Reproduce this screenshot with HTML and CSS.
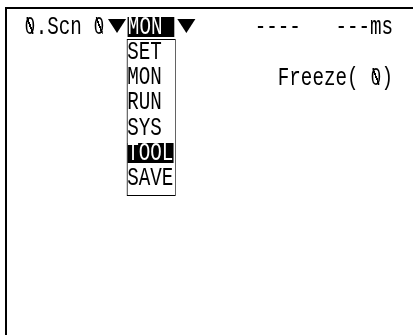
FILE: index.html
```html
<!DOCTYPE html>
<html>
<head>
<meta charset="utf-8">
<link rel="stylesheet" href="styles.css">
</head>
<body>
<div class="frame">
  <div class="lcd">
    <div class="row"><span class="z">0</span>.Scn <span class="z">0</span><span class="tri"></span><span class="hl">MON </span><span class="tri"></span>     ----   ---ms</div>
    <div class="row"></div>
    <div class="row"><span class="freeze">Freeze( <span class="z">0</span>)</span></div>
    <div class="menu">
      <div class="item">SET</div>
      <div class="item">MON</div>
      <div class="item">RUN</div>
      <div class="item">SYS</div>
      <div class="item"><span class="hl">TOOL</span></div>
      <div class="item">SAVE</div>
    </div>
  </div>
</div>
</body>
</html>
```

FILE: styles.css
```css
html, body {
  margin: 0;
  padding: 0;
  background: #fff;
  overflow: hidden;
}

.frame {
  margin: 7px 0 0 5px;
  height: 328px;
  box-sizing: border-box;
  border-top: 2px solid #000;
  border-left: 2px solid #000;
}

.lcd {
  position: relative;
  transform: scaleX(0.7536);
  transform-origin: 0 0;
  padding: 6px 0 0 22.7px;
  font-family: "Liberation Mono", "DejaVu Sans Mono", monospace;
  font-size: 25.5px;
  line-height: 25.3px;
  color: #000;
}

.row,
.item {
  height: 25.3px;
  white-space: pre;
}

.freeze {
  margin-left: 22ch;
}

.z {
  position: relative;
  display: inline-block;
  width: 15.3px;
  text-align: center;
  font-family: "Liberation Sans", sans-serif;
  font-size: 23.5px;
  line-height: 20px;
}

.z::after {
  content: "";
  position: absolute;
  left: 3px;
  right: 3px;
  top: 1.4px;
  height: 16.8px;
  background: linear-gradient(to top right, transparent calc(50% - 1.1px), currentColor calc(50% - 1.1px), currentColor calc(50% + 1.1px), transparent calc(50% + 1.1px));
}

.hl {
  display: inline-block;
  height: 20px;
  line-height: 22px;
  background: #000;
  color: #fff;
}

.tri {
  display: inline-block;
  width: 2ch;
  height: 25.3px;
  vertical-align: top;
}

.tri::before {
  content: "";
  display: block;
  width: 0;
  height: 0;
  margin: 4px 0 0 4.2px;
  border-left: 12.6px solid transparent;
  border-right: 12.6px solid transparent;
  border-top: 14px solid #000;
}

.menu {
  position: absolute;
  top: 29.9px;
  left: calc(22.7px + 9ch - 1.9px);
  width: calc(4ch + 1.9px);
  padding-bottom: 3px;
  background: #fff;
  border-style: solid;
  border-color: #000;
  border-width: 1.5px 1.9px;
}
```
